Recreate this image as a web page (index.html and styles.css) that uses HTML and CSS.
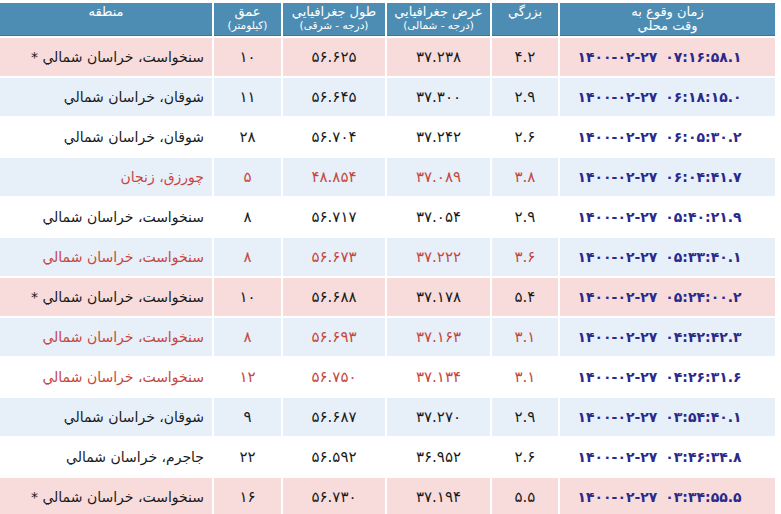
FILE: index.html
```html
<!DOCTYPE html>
<html lang="fa">
<head>
<meta charset="utf-8">
<link rel="stylesheet" href="styles.css">
</head>
<body>
<table class="quakes" dir="rtl">
  <colgroup>
    <col class="c-time"><col class="c-mag"><col class="c-lat"><col class="c-lon"><col class="c-depth"><col class="c-region">
  </colgroup>
  <thead>
    <tr>
      <th>زمان وقوع به<br>وقت محلي</th>
      <th>بزرگي</th>
      <th>عرض جغرافيايي<span class="sub">(درجه - شمالی)</span></th>
      <th>طول جغرافيايي<span class="sub">(درجه - شرقی)</span></th>
      <th>عمق<span class="sub">(کیلومتر)</span></th>
      <th>منطقه</th>
    </tr>
  </thead>
  <tbody>
    <tr class="pink"><td class="time">۱۴۰۰-۰۲-۲۷ ۰۷:۱۶:۵۸.۱</td><td class="num">۴.۲</td><td class="num">۳۷.۲۳۸</td><td class="num">۵۶.۶۲۵</td><td class="num">۱۰</td><td class="region">سنخواست، خراسان شمالي *</td></tr>
    <tr class="blue"><td class="time">۱۴۰۰-۰۲-۲۷ ۰۶:۱۸:۱۵.۰</td><td class="num">۲.۹</td><td class="num">۳۷.۳۰۰</td><td class="num">۵۶.۶۴۵</td><td class="num">۱۱</td><td class="region">شوقان، خراسان شمالي</td></tr>
    <tr class="white"><td class="time">۱۴۰۰-۰۲-۲۷ ۰۶:۰۵:۳۰.۲</td><td class="num">۲.۶</td><td class="num">۳۷.۲۴۲</td><td class="num">۵۶.۷۰۴</td><td class="num">۲۸</td><td class="region">شوقان، خراسان شمالي</td></tr>
    <tr class="blue red"><td class="time">۱۴۰۰-۰۲-۲۷ ۰۶:۰۴:۴۱.۷</td><td class="num">۳.۸</td><td class="num">۳۷.۰۸۹</td><td class="num">۴۸.۸۵۴</td><td class="num">۵</td><td class="region">چورزق، زنجان</td></tr>
    <tr class="white"><td class="time">۱۴۰۰-۰۲-۲۷ ۰۵:۴۰:۲۱.۹</td><td class="num">۲.۹</td><td class="num">۳۷.۰۵۴</td><td class="num">۵۶.۷۱۷</td><td class="num">۸</td><td class="region">سنخواست، خراسان شمالي</td></tr>
    <tr class="blue red"><td class="time">۱۴۰۰-۰۲-۲۷ ۰۵:۳۳:۴۰.۱</td><td class="num">۳.۶</td><td class="num">۳۷.۲۲۲</td><td class="num">۵۶.۶۷۳</td><td class="num">۸</td><td class="region">سنخواست، خراسان شمالي</td></tr>
    <tr class="pink"><td class="time">۱۴۰۰-۰۲-۲۷ ۰۵:۲۴:۰۰.۲</td><td class="num">۵.۴</td><td class="num">۳۷.۱۷۸</td><td class="num">۵۶.۶۸۸</td><td class="num">۱۰</td><td class="region">سنخواست، خراسان شمالي *</td></tr>
    <tr class="blue red"><td class="time">۱۴۰۰-۰۲-۲۷ ۰۴:۴۲:۴۲.۳</td><td class="num">۳.۱</td><td class="num">۳۷.۱۶۳</td><td class="num">۵۶.۶۹۳</td><td class="num">۸</td><td class="region">سنخواست، خراسان شمالي</td></tr>
    <tr class="white red"><td class="time">۱۴۰۰-۰۲-۲۷ ۰۴:۲۶:۳۱.۶</td><td class="num">۳.۱</td><td class="num">۳۷.۱۳۴</td><td class="num">۵۶.۷۵۰</td><td class="num">۱۲</td><td class="region">سنخواست، خراسان شمالي</td></tr>
    <tr class="blue"><td class="time">۱۴۰۰-۰۲-۲۷ ۰۳:۵۴:۴۰.۱</td><td class="num">۲.۹</td><td class="num">۳۷.۲۷۰</td><td class="num">۵۶.۶۸۷</td><td class="num">۹</td><td class="region">شوقان، خراسان شمالي</td></tr>
    <tr class="white"><td class="time">۱۴۰۰-۰۲-۲۷ ۰۳:۴۶:۳۴.۸</td><td class="num">۲.۶</td><td class="num">۳۶.۹۵۲</td><td class="num">۵۶.۵۹۲</td><td class="num">۲۲</td><td class="region">جاجرم، خراسان شمالي</td></tr>
    <tr class="pink"><td class="time">۱۴۰۰-۰۲-۲۷ ۰۳:۳۴:۵۵.۵</td><td class="num">۵.۵</td><td class="num">۳۷.۱۹۴</td><td class="num">۵۶.۷۳۰</td><td class="num">۱۶</td><td class="region">سنخواست، خراسان شمالي *</td></tr>
  </tbody>
</table>
</body>
</html>
```
FILE: styles.css
```css
html, body {
  margin: 0;
  padding: 0;
  background: #ffffff;
}
body {
  font-family: "DejaVu Sans", "Noto Sans", sans-serif;
  overflow: hidden;
}
.quakes {
  border-collapse: separate;
  border-spacing: 2px;
  table-layout: fixed;
  width: 779px;
  margin: 1px 0 0 -2px;
}
.c-time { width: 215px; }
.c-mag { width: 66px; }
.c-lat { width: 103px; }
.c-lon { width: 102px; }
.c-depth { width: 67px; }
.c-region { width: 212px; }

.quakes th {
  background: #4d8db3;
  border-bottom: 1px solid #3d7497;
  color: #ffffff;
  font-weight: normal;
  font-size: 13px;
  line-height: 14px;
  height: 33px;
  padding: 2px 0 0;
  vertical-align: top;
  text-align: center;
  box-sizing: border-box;
}
.quakes th .sub {
  display: block;
  font-size: 10.5px;
  line-height: 13px;
}
.quakes td {
  height: 38px;
  padding: 0;
  font-size: 14px;
  color: #1a1a1a;
  text-align: center;
  vertical-align: middle;
  box-sizing: border-box;
}
.pink td { background: #f8dcdc; }
.blue td { background: #e7eff9; }
.white td { background: #ffffff; }
.red td { color: #c4483e; }

.quakes td.num {
  direction: ltr;
  unicode-bidi: isolate;
  font-size: 15px;
  letter-spacing: 1.5px;
}
.quakes td.time {
  direction: ltr;
  color: #2a2a8c;
  font-weight: bold;
  font-size: 14px;
  letter-spacing: 2px;
  word-spacing: 3px;
  padding-right: 16px;
}
.quakes td.region {
  text-align: right;
  padding-right: 8px;
  font-size: 14px;
}
```
